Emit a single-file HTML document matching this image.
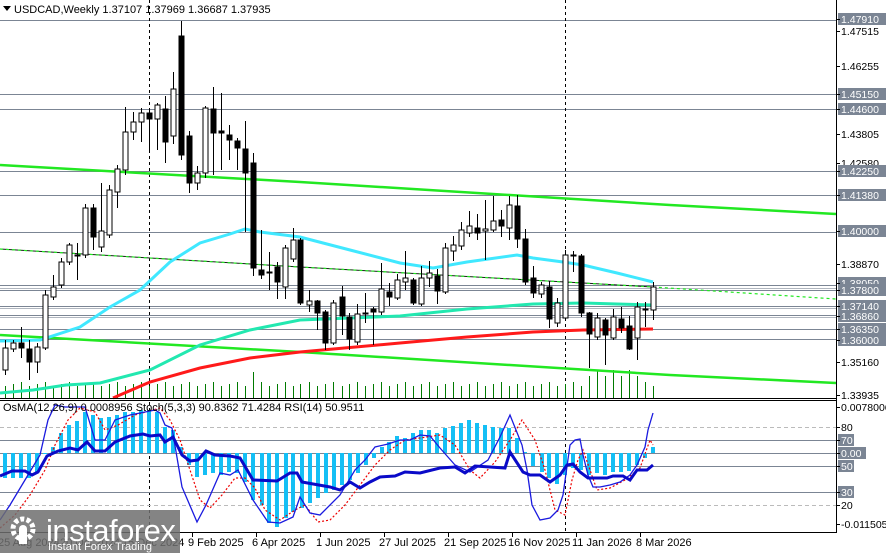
<!DOCTYPE html>
<html><head><meta charset="utf-8"><style>
html,body{margin:0;padding:0;background:#fff;width:886px;height:553px;overflow:hidden}
svg{display:block;font-family:"Liberation Sans",sans-serif}
</style></head><body>
<svg id="s" width="886" height="553" viewBox="0 0 886 553" xmlns="http://www.w3.org/2000/svg">
<rect width="886" height="553" fill="#fff"/>
<g stroke="#7b8594" stroke-width="1" shape-rendering="crispEdges">
<line x1="0" y1="20.5" x2="836" y2="20.5"/><line x1="0" y1="94.5" x2="836" y2="94.5"/><line x1="0" y1="109.5" x2="836" y2="109.5"/>
<line x1="0" y1="171.5" x2="836" y2="171.5"/><line x1="0" y1="195.5" x2="836" y2="195.5"/><line x1="0" y1="232.5" x2="836" y2="232.5"/>
<line x1="0" y1="285.5" x2="836" y2="285.5"/><line x1="0" y1="288.5" x2="836" y2="288.5" stroke="#b0b6bf"/><line x1="0" y1="290.5" x2="836" y2="290.5"/>
<line x1="0" y1="306.5" x2="836" y2="306.5"/><line x1="0" y1="308.5" x2="836" y2="308.5" stroke="#b0b6bf"/><line x1="0" y1="315.5" x2="836" y2="315.5"/><line x1="0" y1="317.5" x2="836" y2="317.5" stroke="#b0b6bf"/>
<line x1="0" y1="329.5" x2="836" y2="329.5"/><line x1="0" y1="339.5" x2="836" y2="339.5"/>
</g>
<g stroke="#000" stroke-dasharray="3,3" shape-rendering="crispEdges">
<line x1="149.5" y1="0" x2="149.5" y2="532"/><line x1="565.5" y1="0" x2="565.5" y2="532"/>
</g>
<g id="vol" stroke="#007a00" stroke-width="1" shape-rendering="crispEdges"></g>
<g fill="none" stroke-width="2.5">
<polyline stroke="#22e822" points="0,165 300,182 670,205 836,214"/>
<polyline stroke="#22e822" points="0,335 300,352 670,375 836,383"/>
<polyline stroke="#1a1a1a" stroke-width="1" points="0,249 300,267 653,287"/>
<polyline stroke="#22e822" stroke-width="1.2" stroke-dasharray="3,3" points="0,249 300,267 653,287 836,299"/>
</g>
<g fill="none" stroke-width="3">
<polyline stroke="#ff1a1a" points="113,398 150,382 200,368 250,358 300,352 400,343 467,337 533,332 583,330 653,329"/>
<polyline stroke="#22e8b0" points="0,393 33,390 66,385 100,383 150,370 200,345 250,330 300,320 350,318 400,316 467,309 533,304 583,303 617,304 653,305"/>
<polyline stroke="#40e8ff" points="0,341 40,340 80,327 110,307 140,290 170,262 200,243 230,234 245,229 260,232 300,237 350,250 400,263 433,268 467,262 517,255 533,258 563,262 583,265 617,273 653,282"/>
</g>
<g id="cd"></g>
<g stroke="#000" shape-rendering="crispEdges">
<line x1="0" y1="398.5" x2="836" y2="398.5"/><line x1="0" y1="400.5" x2="836" y2="400.5"/>
<line x1="0" y1="532.5" x2="836" y2="532.5"/><line x1="836.5" y1="0" x2="836.5" y2="533"/>
</g>
<g stroke="#7b8594" shape-rendering="crispEdges">
<line x1="0" y1="440.5" x2="836" y2="440.5"/><line x1="0" y1="466.5" x2="836" y2="466.5"/><line x1="0" y1="492.5" x2="836" y2="492.5"/><line x1="0" y1="453.5" x2="836" y2="453.5"/>
<line x1="0" y1="427.5" x2="836" y2="427.5" stroke="#bbb" stroke-dasharray="4,3"/><line x1="0" y1="505.5" x2="836" y2="505.5" stroke="#bbb" stroke-dasharray="4,3"/>
</g>
<g id="hist" fill="#14bff5"></g>
<g fill="none">
<polyline stroke="#e00" stroke-width="1.2" stroke-dasharray="2,2" points="0,528 15,515 30,495 45,470 55,445 68,420 80,408 95,412 105,430 118,425 135,415 160,408 170,420 180,440 190,470 200,500 210,508 222,495 235,478 245,478 255,488 265,510 280,520 295,510 305,505 318,522 330,520 345,505 360,485 375,465 390,450 405,440 420,438 440,435 455,445 470,470 480,478 495,462 510,440 522,420 535,440 545,470 555,510 565,515 572,480 578,460 583,450 590,470 597,490 610,488 625,480 640,468 650,440 653,445"/>
<polyline stroke="#1a1adf" stroke-width="1.3" points="0,520 10,505 25,480 40,455 48,420 55,405 65,407 85,407 95,440 105,440 115,420 130,415 155,410 160,413 165,425 172,428 182,487 197,522 206,505 220,473 230,475 238,470 253,500 268,522 280,523 293,517 300,497 310,513 320,515 340,495 355,470 365,460 375,447 388,444 400,440 410,440 420,435 430,436 440,448 455,465 470,472 488,460 500,437 510,415 522,445 527,470 532,505 540,520 550,518 558,510 563,495 570,445 575,440 580,439 583,455 588,475 593,487 600,487 610,485 620,482 630,475 637,465 645,447 648,430 653,413"/>
<polyline stroke="#0a0ac8" stroke-width="3" points="0,476 12,471 25,471 32,475 38,472 47,456 58,451 70,448 78,450 87,442 95,451 105,451 115,442 130,436 143,434 150,436 160,435 165,442 173,437 182,455 190,461 198,460 206,451 215,455 230,456 240,458 253,480 277,481 290,473 297,473 302,482 330,487 340,490 350,482 360,488 370,482 380,477 395,476 405,472 420,473 440,468 455,467 465,473 475,466 490,467 505,468 510,452 523,472 530,475 540,475 550,482 560,475 567,465 573,464 580,472 588,478 607,478 613,476 623,476 630,480 637,470 647,470 653,465"/>
</g>
<g font-size="10.5" fill="#000"><g id="lbl"></g></g>
<text x="14" y="13" font-size="11" fill="#000">USDCAD,Weekly  1.37107 1.37969 1.36687 1.37935</text>
<polygon points="3,6 11,6 7,11" fill="#000"/>
<text x="3" y="411" font-size="11" fill="#000">OsMA(12,26,9) 0.0008956  Stoch(5,3,3) 90.8362 71.4284  RSI(14) 50.9511</text>
<g font-size="11" fill="#000">
<text x="-2" y="546">25 Aug 2024</text><text x="60" y="546">20 Oct 2024</text><text x="122" y="546">15 Dec 2024</text>
<text x="188" y="546">9 Feb 2025</text><text x="252" y="546">6 Apr 2025</text><text x="316" y="546">1 Jun 2025</text>
<text x="379" y="546">27 Jul 2025</text><text x="444" y="546">21 Sep 2025</text><text x="508" y="546">16 Nov 2025</text>
<text x="572" y="546">11 Jan 2026</text><text x="636" y="546">8 Mar 2026</text>
</g>
<g stroke="#000" shape-rendering="crispEdges"><line x1="64.5" y1="533" x2="64.5" y2="537"/><line x1="192.5" y1="533" x2="192.5" y2="537"/><line x1="256.5" y1="533" x2="256.5" y2="537"/><line x1="320.5" y1="533" x2="320.5" y2="537"/><line x1="384.5" y1="533" x2="384.5" y2="537"/><line x1="448.5" y1="533" x2="448.5" y2="537"/><line x1="512.5" y1="533" x2="512.5" y2="537"/><line x1="576.5" y1="533" x2="576.5" y2="537"/><line x1="640.5" y1="533" x2="640.5" y2="537"/></g>
<rect x="0" y="510" width="180" height="43" fill="#6e6e6e" opacity="0.85"/>
<g fill="#fff">
<circle cx="23" cy="529" r="10" fill="none" stroke="#fff" stroke-width="5" stroke-dasharray="4,2.3"/>
<circle cx="23" cy="529" r="4"/>
<rect x="19" y="529" width="8" height="15"/>
<text x="46" y="541" font-size="31" letter-spacing="-0.5">instaforex</text>
<text x="48" y="550" font-size="11">Instant Forex Trading</text>
</g>
</svg>
<script>
var NS="http://www.w3.org/2000/svg";
function el(p,t,a){var e=document.createElementNS(NS,t);for(var k in a)e.setAttribute(k,a[k]);p.appendChild(e);return e;}
var C=[[5,370,348,340,375],[13,349,343,340,352],[21,343,348,327,358],[29,349,362,340,380],[37,362,347,343,373],[45,348,295,290,350],[53,297,287,275,300],[61,285,262,258,288],[69,262,245,243,265],[77,255,256,243,280],[85,255,208,204,258],[93,208,237,204,250],[101,247,231,183,252],[109,235,190,185,238],[117,192,169,165,208],[125,170,132,107,175],[133,132,122,112,140],[141,122,113,108,142],[149,113,119,108,153],[157,119,105,103,150],[165,109,142,96,163],[173,136,89,72,144],[181,36,155,21,160],[189,136,183,131,193],[197,183,173,166,190],[205,173,108,106,178],[213,109,133,87,175],[221,131,133,93,170],[229,135,140,125,160],[237,141,148,138,170],[245,149,173,121,232],[253,163,268,153,276],[261,270,275,230,279],[269,272,273,252,290],[277,267,282,262,299],[285,287,248,245,299],[293,259,240,228,262],[300,240,303,238,305],[309,305,301,290,312],[317,301,313,300,330],[325,312,343,310,350],[333,343,303,300,345],[342,297,316,286,335],[349,317,339,313,350],[357,342,314,304,345],[365,313,314,293,323],[373,309,312,307,345],[381,312,289,263,315],[389,292,297,283,306],[397,298,280,274,300],[405,282,278,251,290],[413,280,303,278,305],[421,304,278,266,306],[429,278,273,261,287],[437,276,291,269,304],[445,292,248,243,294],[453,251,245,236,261],[461,246,230,222,250],[469,233,226,211,237],[477,228,233,214,240],[485,231,229,200,260],[493,230,221,196,232],[501,220,226,210,237],[509,228,205,196,240],[517,206,239,195,248],[525,239,282,229,285],[533,278,293,266,298],[541,294,285,282,298],[549,287,319,281,328],[557,323,303,298,327],[565,318,255,250,320],[573,255,256,251,272],[581,256,313,254,317],[589,313,334,312,368],[597,337,318,313,340],[605,320,335,318,365],[613,338,317,309,340],[621,319,328,307,333],[629,326,349,316,350],[637,338,307,302,360],[645,309,310,302,327],[653,310,287,282,320]];
var cd=document.getElementById("cd"),vol=document.getElementById("vol");
C.forEach(function(c,i){var x=c[0]+0.5;
el(cd,"line",{x1:x,y1:c[3],x2:x,y2:c[4],stroke:"#000","stroke-width":1});
var t=Math.min(c[1],c[2]),b=Math.max(c[1],c[2]);if(b-t<1)b=t+1;
el(cd,"rect",{x:c[0]-2,y:t,width:5,height:b-t,fill:c[2]<c[1]?"#fff":"#000",stroke:"#000","stroke-width":1});
var h=[386,384,382][i%3];if(c[0]==253)h=372;if(c[0]>=589&&c[0]<=637)h=370+(i%2)*6;
el(vol,"line",{x1:x,y1:h,x2:x,y2:398});});
var H=[[5,478],[13,478],[21,478],[29,478],[37,472],[45,453],[53,447],[61,433],[69,425],[77,421],[85,412],[93,415],[101,418],[109,417],[117,415],[125,412],[133,412],[141,410],[149,410],[157,412],[165,427],[173,430],[181,447],[189,465],[197,477],[205,475],[213,473],[221,475],[229,472],[237,473],[245,482],[253,500],[262,505],[269,523],[277,527],[286,518],[293,512],[302,508],[310,503],[318,498],[326,493],[334,490],[342,485],[350,480],[358,473],[366,465],[374,458],[382,447],[389,442],[397,436],[405,438],[413,433],[421,430],[429,430],[437,433],[445,428],[453,426],[461,423],[469,420],[477,423],[485,425],[493,427],[501,428],[509,428],[517,438],[525,452],[533,466],[542,472],[549,478],[557,484],[565,475],[573,468],[581,470],[589,475],[597,473],[605,475],[613,472],[621,472],[629,471],[637,465],[645,458],[653,447]];
var hg=document.getElementById("hist");
H.forEach(function(h){var y=Math.min(h[1],453),b=Math.max(h[1],453);if(b-y<1)b=y+1;el(hg,"rect",{x:h[0]-2,y:y,width:4,height:b-y});});
var L=[["1.47910",19,1],["1.47515",31,0],["1.46255",66,0],["1.45150",94,1],["1.44600",109,1],["1.43805",134,0],["1.42580",163,0],["1.42250",171,1],["1.41380",195,1],["1.40000",231,1],["1.38870",264,0],["1.38050",283,1],["1.37800",290,1],["1.37140",306,1],["1.36860",316,1],["1.36350",329,1],["1.36000",340,1],["1.35160",362,0],["1.33935",395,0],["0.0078006",407,0],["80",427,0],["70",440,1],["0.00",453,1],["50",466,1],["30",492,1],["20",505,0],["-0.011505",524,0]];
var lg=document.getElementById("lbl");
L.forEach(function(l){var w=l[0].length<=4?l[0].length*6+4:48;
if(l[2])el(lg,"rect",{x:838,y:l[1]-6,width:w,height:12,fill:"#7b8594"});
el(lg,"line",{x1:836,y1:l[1]+0.5,x2:840,y2:l[1]+0.5,stroke:"#000"});
var t=el(lg,"text",{x:841,y:l[1]+4,fill:l[2]?"#fff":"#000"});t.textContent=l[0];});
</script>
</body></html>
